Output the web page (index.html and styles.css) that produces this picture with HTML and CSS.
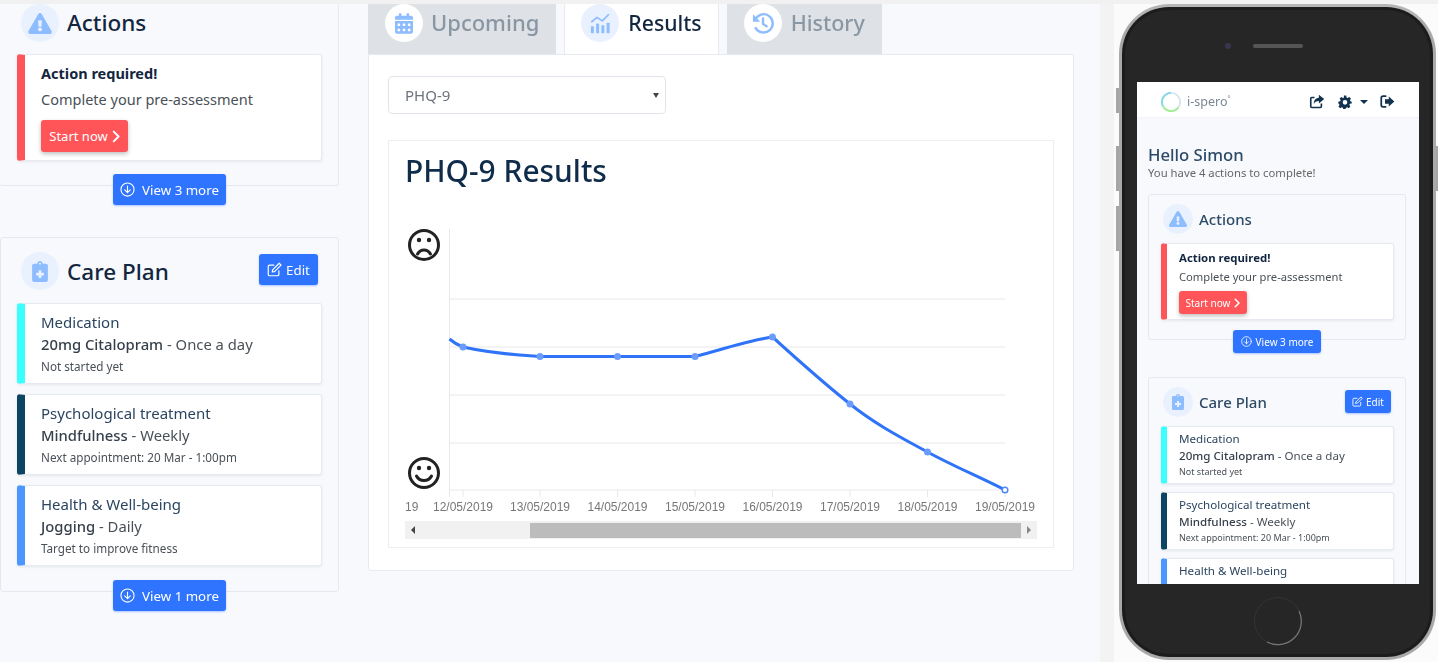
FILE: index.html
```html
<!DOCTYPE html>
<html lang="en">
<head>
    <meta charset="UTF-8">
    <meta name="viewport" content="width=device-width, initial-scale=1.0">
    <title>i-spero Dashboard</title>
    <link rel="stylesheet" href="styles.css">
</head>
<body>
    <!-- Shared icons -->
    <svg class="icon-defs" xmlns="http://www.w3.org/2000/svg">
        <symbol id="i-warning" viewBox="0 0 576 512"><path fill="currentColor" d="M569.517 440.013C587.975 472.007 564.806 512 527.94 512H48.054c-36.937 0-59.999-40.055-41.577-71.987L246.423 23.985c18.467-32.009 64.72-31.951 83.154 0l239.94 416.028zM288 354c-25.405 0-46 20.595-46 46s20.595 46 46 46 46-20.595 46-46-20.595-46-46-46zm-43.673-165.346l7.418 136c.347 6.364 5.609 11.346 11.982 11.346h48.546c6.373 0 11.635-4.982 11.982-11.346l7.418-136c.375-6.874-5.098-12.654-11.982-12.654h-63.383c-6.884 0-12.356 5.78-11.981 12.654z"/></symbol>
        <symbol id="i-calendar" viewBox="0 0 448 512"><path fill="currentColor" d="M0 464c0 26.5 21.5 48 48 48h352c26.5 0 48-21.5 48-48V192H0v272zm320-196c0-6.6 5.4-12 12-12h40c6.6 0 12 5.4 12 12v40c0 6.6-5.4 12-12 12h-40c-6.6 0-12-5.4-12-12v-40zm0 128c0-6.6 5.4-12 12-12h40c6.6 0 12 5.4 12 12v40c0 6.6-5.4 12-12 12h-40c-6.6 0-12-5.4-12-12v-40zM192 268c0-6.6 5.4-12 12-12h40c6.6 0 12 5.4 12 12v40c0 6.6-5.4 12-12 12h-40c-6.6 0-12-5.4-12-12v-40zm0 128c0-6.6 5.4-12 12-12h40c6.6 0 12 5.4 12 12v40c0 6.6-5.4 12-12 12h-40c-6.6 0-12-5.4-12-12v-40zM64 268c0-6.6 5.4-12 12-12h40c6.6 0 12 5.4 12 12v40c0 6.6-5.4 12-12 12H76c-6.6 0-12-5.4-12-12v-40zm0 128c0-6.6 5.4-12 12-12h40c6.6 0 12 5.4 12 12v40c0 6.6-5.4 12-12 12H76c-6.6 0-12-5.4-12-12v-40zM400 64h-48V16c0-8.8-7.2-16-16-16h-32c-8.8 0-16 7.2-16 16v48H160V16c0-8.8-7.2-16-16-16h-32c-8.8 0-16 7.2-16 16v48H48C21.5 64 0 85.5 0 112v48h448v-48c0-26.5-21.5-48-48-48z"/></symbol>
        <symbol id="i-chart" viewBox="0 0 24 24"><g fill="currentColor"><rect x="1" y="15" width="3.4" height="8" rx=".8"/><rect x="7" y="12" width="3.4" height="11" rx=".8"/><rect x="13" y="14" width="3.4" height="9" rx=".8"/><rect x="19" y="11" width="3.4" height="12" rx=".8"/></g><path d="M2 10l6-5 6 4 7-7" fill="none" stroke="currentColor" stroke-width="2" stroke-linecap="round" stroke-linejoin="round"/></symbol>
        <symbol id="i-history" viewBox="0 0 24 24"><g fill="none" stroke="currentColor" stroke-width="2.6" stroke-linecap="round"><path d="M3.4 8.5A10 10 0 1 1 4 17.5"/><path d="M12 7v6l4 2.5"/></g><path fill="currentColor" d="M1 2.5v8h8z"/></symbol>
        <symbol id="i-clipboard" viewBox="0 0 384 512"><path fill="currentColor" d="M336 64h-80c0-35.3-28.7-64-64-64s-64 28.7-64 64H48C21.5 64 0 85.5 0 112v352c0 26.5 21.5 48 48 48h288c26.5 0 48-21.5 48-48V112c0-26.5-21.5-48-48-48zM192 40c13.3 0 24 10.7 24 24s-10.7 24-24 24-24-10.7-24-24 10.7-24 24-24zm96 304c0 4.4-3.6 8-8 8h-56v56c0 4.4-3.6 8-8 8h-48c-4.4 0-8-3.6-8-8v-56h-56c-4.4 0-8-3.6-8-8v-48c0-4.4 3.6-8 8-8h56v-56c0-4.4 3.6-8 8-8h48c4.4 0 8 3.6 8 8v56h56c4.4 0 8 3.6 8 8v48z"/></symbol>
        <symbol id="i-down" viewBox="0 0 24 24"><g fill="none" stroke="currentColor" stroke-width="1.8" stroke-linecap="round" stroke-linejoin="round"><circle cx="12" cy="12" r="10.5"/><path d="M12 6.5v10.5M7.5 12.5l4.5 4.5 4.5-4.5"/></g></symbol>
        <symbol id="i-edit" viewBox="0 0 24 24"><g fill="none" stroke="currentColor" stroke-width="1.9" stroke-linecap="round" stroke-linejoin="round"><path d="M19 14v6a2 2 0 0 1-2 2H4a2 2 0 0 1-2-2V7a2 2 0 0 1 2-2h7"/><path d="M9 12.5L19.5 2 22.500 5 12 15.500 8.500 16z"/></g></symbol>
        <symbol id="i-chevron" viewBox="0 0 12 20"><path d="M2.500 2.500L10 10l-7.500 7.500" fill="none" stroke="currentColor" stroke-width="3" stroke-linecap="round" stroke-linejoin="round"/></symbol>
        <symbol id="i-share" viewBox="0 0 24 24"><g fill="none" stroke="currentColor" stroke-width="2.600" stroke-linejoin="round"><path d="M19 15v5a1.500 1.500 0 0 1-1.500 1.500h-14A1.500 1.500 0 0 1 2 20V7a1.500 1.500 0 0 1 1.500-1.500H8"/></g><path fill="currentColor" d="M15 1l8.500 7-8.500 7v-4c-4 0-6.500 1-8 5-.5-6 3-9.500 8-10z"/></symbol>
        <symbol id="i-cog" viewBox="0 0 24 24"><path fill="currentColor" fill-rule="evenodd" d="M10 1h4l.7 3.200 1.900.8 2.800-1.700 2.800 2.800-1.700 2.800.8 1.900L23.500 11.500v3l-3.200.7-.8 1.900 1.700 2.800-2.800 2.800-2.800-1.700-1.900.8-.7 2.200h-4l-.7-2.200-1.900-.8-2.800 1.700-2.800-2.800 1.700-2.800-.8-1.900L.5 14.500v-3l3.200-.7.8-1.900L2.800 6.100l2.800-2.800 2.800 1.700 1.900-.8zM12 8.500a4 4 0 1 0 0 8 4 4 0 0 0 0-8z"/></symbol>
        <symbol id="i-signout" viewBox="0 0 24 24"><path d="M9 3.500H5A3 3 0 0 0 2 6.500v11a3 3 0 0 0 3 3h4" fill="none" stroke="currentColor" stroke-width="2.800" stroke-linecap="round"/><path fill="currentColor" d="M14 4l9 8-9 8v-4.500H8v-7h6z"/></symbol>
    </svg>

    <div class="top-strip"></div>

    <div class="page">
        <!-- Left column -->
        <div class="left-col">
            <section class="panel panel-first">
                <div class="panel-head">
                    <span class="icon-circle"><svg class="icon icon-warning"><use href="#i-warning"/></svg></span>
                    <h2>Actions</h2>
                </div>
                <div class="item item-red item-alert">
                    <div class="item-strong">Action required!</div>
                    <div class="item-line">Complete your pre-assessment</div>
                    <button class="btn btn-red">Start now <svg class="icon-chevron"><use href="#i-chevron"/></svg></button>
                </div>
            </section>
            <button class="btn btn-blue btn-more"><svg class="icon-small"><use href="#i-down"/></svg> View 3 more</button>

            <section class="panel panel-second">
                <div class="panel-head">
                    <span class="icon-circle"><svg class="icon icon-clipboard"><use href="#i-clipboard"/></svg></span>
                    <h2>Care Plan</h2>
                    <button class="btn btn-blue btn-edit"><svg class="icon-small"><use href="#i-edit"/></svg> Edit</button>
                </div>
                <div class="item-list">
                    <div class="item item-cyan">
                        <div class="item-title">Medication</div>
                        <div class="item-line"><span class="item-name">20mg Citalopram</span> - Once a day</div>
                        <div class="item-note">Not started yet</div>
                    </div>
                    <div class="item item-navy">
                        <div class="item-title">Psychological treatment</div>
                        <div class="item-line"><span class="item-name">Mindfulness</span> - Weekly</div>
                        <div class="item-note">Next appointment: 20 Mar - 1:00pm</div>
                    </div>
                    <div class="item item-blue">
                        <div class="item-title">Health &amp; Well-being</div>
                        <div class="item-line"><span class="item-name">Jogging</span> - Daily</div>
                        <div class="item-note">Target to improve fitness</div>
                    </div>
                </div>
            </section>
            <button class="btn btn-blue btn-more"><svg class="icon-small"><use href="#i-down"/></svg> View 1 more</button>
        </div>

        <!-- Results column -->
        <div class="center-col">
            <div class="tabs">
                <div class="tab tab-upcoming"><span class="icon-circle"><svg class="icon icon-calendar"><use href="#i-calendar"/></svg></span>Upcoming</div>
                <div class="tab tab-active"><span class="icon-circle"><svg class="icon icon-chart"><use href="#i-chart"/></svg></span>Results</div>
                <div class="tab"><span class="icon-circle"><svg class="icon icon-history"><use href="#i-history"/></svg></span>History</div>
            </div>
            <div class="tab-body">
                <div class="select-wrap">
                    <select class="results-select"><option>PHQ-9</option></select>
                </div>
                <div class="chart-card">
                    <h1>PHQ-9 Results</h1>
                    <svg class="chart" viewBox="0 0 632 329" xmlns="http://www.w3.org/2000/svg">
                        <g class="face">
                            <circle cx="19" cy="53" r="14.500"/>
                            <path d="M12.500 62c3-5.500 10-5.500 13 0"/>
                            <circle cx="19" cy="281" r="14.500"/>
                            <path d="M11.500 284c3 6 12 6 15 0"/>
                        </g>
                        <g class="face-eyes">
                            <circle cx="14" cy="48" r="2.200"/><circle cx="24" cy="48" r="2.200"/>
                            <circle cx="14" cy="276" r="2.200"/><circle cx="24" cy="276" r="2.200"/>
                        </g>
                        <g class="grid">
                            <path d="M44.500 107H600M44.500 155H600M44.500 203H600M44.500 251H600"/>
                            <path d="M44.500 37V305M44.500 298H600"/>
                            <path d="M58 298v7M135 298v7M212.500 298v7M290 298v7M367.500 298v7M445 298v7M522.500 298v7M600 298v7"/>
                        </g>
                        <path class="line" d="M44.500 147C48 150 52 153 58 155C80 160 110 163 135 164.500L290 164.500C320 157 340 149 367.500 145C395 170 420 192 445 212C470 232 495 245 522.500 260C550 275 575 285 600 298"/>
                        <g class="dots">
                            <circle cx="58" cy="155" r="3.500"/><circle cx="135" cy="164.500" r="3.500"/>
                            <circle cx="212.500" cy="164.500" r="3.500"/><circle cx="290" cy="164.500" r="3.500"/>
                            <circle cx="367.500" cy="145" r="3.500"/><circle cx="445" cy="212" r="3.500"/>
                            <circle cx="522.500" cy="260" r="3.500"/>
                        </g>
                        <circle class="dot-last" cx="600" cy="298" r="2.800"/>
                        <g class="labels">
                            <text x="0" y="319" class="label-start">19</text>
                            <text x="58" y="319">12/05/2019</text>
                            <text x="135" y="319">13/05/2019</text>
                            <text x="212.500" y="319">14/05/2019</text>
                            <text x="290" y="319">15/05/2019</text>
                            <text x="367.500" y="319">16/05/2019</text>
                            <text x="445" y="319">17/05/2019</text>
                            <text x="522.500" y="319">18/05/2019</text>
                            <text x="600" y="319">19/05/2019</text>
                        </g>
                    </svg>
                    <div class="scrollbar">
                        <span class="arrow arrow-left"></span>
                        <span class="thumb"></span>
                        <span class="arrow arrow-right"></span>
                    </div>
                </div>
            </div>
        </div>

        <!-- Phone preview -->
        <div class="phone-area">
            <div class="phone">
                <span class="side-btn side-a"></span>
                <span class="side-btn side-b"></span>
                <span class="side-btn side-c"></span>
                <span class="side-btn side-d"></span>
                <div class="phone-top"><span class="speaker"></span></div>
                <div class="screen">
                    <div class="navbar">
                        <svg class="logo" viewBox="0 0 24 24"><circle cx="12" cy="12" r="10" fill="none" stroke="#d5e4ee" stroke-width="2"/><path d="M3 16a10 10 0 0 0 17 2" fill="none" stroke="#9df08f" stroke-width="2"/><path d="M12 2a10 10 0 0 0-9 14" fill="none" stroke="#7fd8e6" stroke-width="2"/></svg>
                        <span class="brand">i-spero<sup>°</sup></span>
                        <span class="nav-icons">
                            <svg class="nav-icon nav-share"><use href="#i-share"/></svg>
                            <svg class="nav-icon nav-cog"><use href="#i-cog"/></svg>
                            <span class="caret"></span>
                            <svg class="nav-icon nav-out"><use href="#i-signout"/></svg>
                        </span>
                    </div>
                    <div class="screen-body">
                        <div class="hello">Hello Simon</div>
                        <div class="hello-sub">You have 4 actions to complete!</div>

                        <section class="panel">
                            <div class="panel-head">
                                <span class="icon-circle"><svg class="icon icon-warning"><use href="#i-warning"/></svg></span>
                                <h2>Actions</h2>
                            </div>
                            <div class="item item-red item-alert">
                                <div class="item-strong">Action required!</div>
                                <div class="item-line">Complete your pre-assessment</div>
                                <button class="btn btn-red">Start now <svg class="icon-chevron"><use href="#i-chevron"/></svg></button>
                            </div>
                        </section>
                        <button class="btn btn-blue btn-more"><svg class="icon-small"><use href="#i-down"/></svg> View 3 more</button>

                        <section class="panel panel-second">
                            <div class="panel-head">
                                <span class="icon-circle"><svg class="icon icon-clipboard"><use href="#i-clipboard"/></svg></span>
                                <h2>Care Plan</h2>
                                <button class="btn btn-blue btn-edit"><svg class="icon-small"><use href="#i-edit"/></svg> Edit</button>
                            </div>
                            <div class="item-list">
                                <div class="item item-cyan">
                                    <div class="item-title">Medication</div>
                                    <div class="item-line"><span class="item-name">20mg Citalopram</span> - Once a day</div>
                                    <div class="item-note">Not started yet</div>
                                </div>
                                <div class="item item-navy">
                                    <div class="item-title">Psychological treatment</div>
                                    <div class="item-line"><span class="item-name">Mindfulness</span> - Weekly</div>
                                    <div class="item-note">Next appointment: 20 Mar - 1:00pm</div>
                                </div>
                                <div class="item item-blue">
                                    <div class="item-title">Health &amp; Well-being</div>
                                    <div class="item-line"><span class="item-name">Jogging</span> - Daily</div>
                                    <div class="item-note">Target to improve fitness</div>
                                </div>
                            </div>
                        </section>
                    </div>
                </div>
                <div class="phone-bottom">
                    <svg class="home-btn" viewBox="0 0 50 50">
                        <circle cx="25" cy="25" r="23.500" fill="none" stroke="#343434" stroke-width="1"/>
                        <path d="M46 15A23.500 23.500 0 0 1 14 46" fill="none" stroke="#777" stroke-width="1.200"/>
                    </svg>
                </div>
            </div>
        </div>
    </div>
</body>
</html>
```

FILE: styles.css
```css
* {
    margin: 0;
    padding: 0;
    box-sizing: border-box;
}

html, body {
    height: 100%;
    overflow: hidden;
}

body {
    background-color: #f8f9fc;
    font-family: "Noto Sans", Arial, sans-serif;
    color: #12263f;
    display: flex;
    flex-direction: column;
}

.icon-defs {
    display: none;
}

.top-strip {
    height: 4px;
    background-color: #f1f1f1;
    flex-shrink: 0;
}

.page {
    flex: 1;
    min-height: 0;
    display: flex;
    overflow: hidden;
    filter: blur(0.5px);
}

/* Left column */
.left-col {
    width: 339px;
    flex-shrink: 0;
    display: flex;
    flex-direction: column;
}

.panel {
    border: 1px solid #e5e8ee;
    border-radius: 3px;
    padding: 14px 16px 25px 16px;
    background-color: #f8f9fc;
}

.panel-first {
    border-top: none;
    border-left: none;
    padding: 0 16px 25px 17px;
    height: 182px;
}

.panel-second {
    margin-top: 32px;
}

.panel-head {
    display: flex;
    align-items: center;
    height: 38px;
    margin-bottom: 13px;
}

.panel-first .panel-head {
    margin-bottom: 12px;
    padding-left: 4px;
}

.panel-first .panel-head h2 {
    margin-top: -2px;
}

.panel-second .panel-head {
    padding-left: 4px;
}

.panel-head h2 {
    font-size: 22.500px;
    font-weight: 500;
    margin-left: 8px;
    color: #12263f;
}

.icon-circle {
    width: 38px;
    height: 38px;
    border-radius: 50%;
    background-color: #e9f1ff;
    display: inline-flex;
    align-items: center;
    justify-content: center;
    flex-shrink: 0;
    color: #8dbcff;
}

.icon-warning { width: 24px; height: 21px; }
.icon-clipboard { width: 16px; height: 21px; }
.icon-calendar { width: 18px; height: 21px; }
.icon-chart { width: 21px; height: 21px; }
.icon-history { width: 22px; height: 22px; }

.item {
    background-color: #fff;
    border: 1px solid #e7eaf0;
    border-left: 8px solid #ccc;
    border-radius: 3px;
    padding: 7px 8px 6px 16px;
    box-shadow: 0 1px 3px rgba(0, 0, 0, 0.08);
    height: 81px;
    font-size: 15px;
    line-height: 22px;
    color: #495057;
}

.item-alert {
    height: 107px;
    padding-top: 7px;
    font-size: 14.500px;
}

.item-red { border-left-color: #ff5558; }
.item-cyan { border-left-color: #39ffff; }
.item-navy { border-left-color: #0b4563; }
.item-blue { border-left-color: #4c97ff; }

.item-list {
    display: flex;
    flex-direction: column;
    gap: 10px;
}

.item-strong {
    font-weight: 700;
    color: #12263f;
    margin-bottom: 4px;
}

.item-title {
    color: #2b4560;
}

.item-line {
    font-size: 14.800px;
}

.item-alert .item-line {
    font-size: 14.500px;
}

.item-name {
    color: #343f4b;
    font-weight: 500;
}

.item-note {
    font-size: 11.700px;
    color: #495057;
}

.btn {
    border: none;
    border-radius: 3px;
    color: #fff;
    font-family: inherit;
    font-size: 13.300px;
    height: 32px;
    display: inline-flex;
    align-items: center;
    justify-content: center;
}

.btn-red {
    background-color: #ff5558;
    width: 87px;
    margin-top: 10px;
    box-shadow: 0 2px 4px rgba(0, 0, 0, 0.25);
    gap: 4px;
    font-size: 13px;
}

.btn-blue {
    background-color: #2f74ff;
    box-shadow: 0 1px 2px rgba(47, 116, 255, 0.4);
}

.btn-more {
    width: 113px;
    height: 31px;
    align-self: center;
    margin-top: -12px;
    position: relative;
    gap: 7px;
}

.btn-edit {
    width: 59px;
    height: 31px;
    margin-left: auto;
    margin-right: 4px;
    margin-top: -3px;
    gap: 4px;
}

.icon-small {
    width: 15px;
    height: 15px;
    flex-shrink: 0;
}

.icon-chevron {
    width: 8px;
    height: 13px;
}

/* Results column */
.center-col {
    width: 706px;
    margin-left: 29px;
    flex-shrink: 0;
    display: flex;
    flex-direction: column;
}

.tabs {
    display: flex;
    gap: 8px;
    height: 50px;
}

.tab {
    display: flex;
    align-items: flex-start;
    gap: 9px;
    padding: 0 17px;
    background-color: #dee2e6;
    color: #8996a3;
    font-size: 21.500px;
    font-weight: 500;
    line-height: 37px;
}

.tab-upcoming {
    gap: 8px;
    font-size: 22px;
}

.tab .icon-circle {
    background-color: #fff;
}

.tab-active {
    background-color: #fff;
    color: #12263f;
    border: 1px solid #e7eaf0;
    border-top: none;
    border-bottom: none;
    padding: 0 16px;
    font-size: 21.200px;
    position: relative;
}

.tab-active .icon-circle {
    background-color: #e9f1ff;
}

.tab-body {
    background-color: #fff;
    border: 1px solid #e7eaf0;
    border-radius: 0 0 3px 3px;
    height: 517px;
    padding: 21px 19px;
}

.select-wrap {
    width: 278px;
    height: 38px;
    position: relative;
}

.select-wrap::after {
    content: "";
    position: absolute;
    right: 7px;
    top: 17px;
    border-left: 3px solid transparent;
    border-right: 3px solid transparent;
    border-top: 5px solid #444;
}

.results-select {
    appearance: none;
    width: 100%;
    height: 100%;
    background-color: #fff;
    border: 1.500px solid #e1e5eb;
    border-radius: 4px;
    padding: 0 16px;
    font-family: inherit;
    font-size: 15px;
    color: #6c757d;
}

.chart-card {
    margin-top: 26px;
    height: 408px;
    border: 1px solid #eeeeee;
    padding: 9px 16px 0 16px;
}

.chart-card h1 {
    font-size: 29.900px;
    font-weight: 500;
    line-height: 42px;
    color: #0f2c4a;
}

.chart {
    display: block;
    width: 632px;
    height: 329px;
}

.face {
    fill: none;
    stroke: #222;
    stroke-width: 3;
    stroke-linecap: round;
}

.face-eyes {
    fill: #222;
}

.grid {
    fill: none;
    stroke: #e8e8e8;
    stroke-width: 1;
}

.line {
    fill: none;
    stroke: #2e73f8;
    stroke-width: 3;
}

.dots {
    fill: #6c9cfb;
}

.dot-last {
    fill: #fff;
    stroke: #4e88fa;
    stroke-width: 1.500;
}

.labels {
    font-family: "Liberation Sans", Arial, sans-serif;
    font-size: 12px;
    fill: #777;
    text-anchor: middle;
}

.labels .label-start {
    text-anchor: start;
}

.scrollbar {
    height: 18px;
    background-color: #f1f1f1;
    display: flex;
    align-items: center;
}

.thumb {
    height: 15px;
    flex: 1;
    background-color: #bcbcbc;
}

.arrow {
    width: 0;
    height: 0;
    border-top: 4px solid transparent;
    border-bottom: 4px solid transparent;
}

.arrow-left {
    border-right: 4px solid #444;
    margin-left: 6px;
    margin-right: 115px;
}

.arrow-right {
    border-left: 4px solid #888;
    margin-left: 6px;
    margin-right: 6px;
}

/* Phone preview */
.phone-area {
    width: 338px;
    margin-left: 26px;
    flex-shrink: 0;
    background-color: #fbfbfb;
    border-left: 14px solid #f3f3f3;
    padding-left: 5px;
}

.phone {
    width: 317px;
    height: 656px;
    background-color: #262626;
    border: 3px solid #a9a9a9;
    border-top-color: #b5b5b5;
    border-radius: 50px;
    box-shadow: inset 0 0 0 3px #1c1c1c;
    display: flex;
    flex-direction: column;
    align-items: stretch;
    position: relative;
}

.side-btn {
    position: absolute;
    width: 3px;
    background-color: #a5a5a5;
    left: -6px;
}

.side-a { top: 81px; height: 25px; }
.side-b { top: 139px; height: 45px; }
.side-c { top: 199px; height: 45px; }
.side-d { left: auto; right: -5px; top: 139px; height: 45px; width: 2px; }

.phone-top {
    height: 75px;
    flex-shrink: 0;
    display: flex;
    justify-content: center;
    padding-top: 37px;
}

.speaker {
    width: 50px;
    height: 4px;
    border-radius: 2px;
    background-color: #555;
    position: relative;
}

.speaker::before {
    content: "";
    position: absolute;
    left: -28px;
    top: -1px;
    width: 6px;
    height: 6px;
    border-radius: 50%;
    background-color: #3c3350;
}

.screen {
    height: 502px;
    width: 282px;
    margin-left: 15px;
    background-color: #f8f9fc;
    overflow: hidden;
    filter: blur(0.3px);
    flex-shrink: 0;
}

.phone-bottom {
    flex: 1;
    display: flex;
    align-items: flex-start;
    justify-content: center;
    padding-top: 12px;
}

.home-btn {
    width: 50px;
    height: 50px;
}

.navbar {
    height: 36px;
    background-color: #fff;
    display: flex;
    align-items: center;
    padding: 4px 0 0 23px;
    border-bottom: 1px solid #f3f4f6;
}

.logo {
    width: 22px;
    height: 22px;
}

.brand {
    font-size: 12.500px;
    color: #7a8793;
    margin-left: 5px;
}

.brand sup {
    font-size: 7px;
}

.nav-icons {
    margin-left: auto;
    margin-right: 24px;
    display: flex;
    align-items: center;
    color: #12324f;
}

.nav-icon {
    width: 16px;
    height: 15px;
}

.nav-cog {
    margin-left: 13px;
    width: 14px;
    height: 14px;
}

.caret {
    margin-left: 8px;
    border-left: 4px solid transparent;
    border-right: 4px solid transparent;
    border-top: 4px solid #12324f;
}

.nav-out {
    margin-left: 12px;
    width: 15px;
}

.screen-body {
    padding: 26px 13px 0 11px;
    display: flex;
    flex-direction: column;
}

.hello {
    font-size: 16.700px;
    line-height: 22px;
    font-weight: 500;
    color: #2d4a66;
}

.hello-sub {
    font-size: 11.300px;
    line-height: 14px;
    color: #666;
    margin-bottom: 14px;
}

.screen .panel {
    padding: 9px 11px 19px 12px;
}

.screen .panel-head {
    height: 30px;
    margin-bottom: 9px;
    padding-left: 2px;
}

.screen .panel-head h2 {
    font-size: 15px;
    font-weight: 500;
    margin: 0 0 0 6px;
    color: #2d4a66;
}

.screen .panel-second {
    margin-top: 24px;
}

.screen .icon-circle {
    width: 30px;
    height: 30px;
}

.screen .icon-warning { width: 18px; height: 16px; }
.screen .icon-clipboard { width: 12px; height: 16px; }

.screen .item {
    border-left-width: 6px;
    padding: 4px 6px 3px 12px;
    font-size: 11.600px;
    line-height: 16.500px;
    height: 58px;
}

.screen .item-line {
    font-size: 11.600px;
}

.screen .item-alert {
    height: 77px;
    padding-top: 6px;
    font-size: 11.200px;
}

.screen .item-alert .item-line {
    font-size: 11.200px;
}

.screen .item-strong {
    font-size: 11.400px;
    margin-bottom: 2px;
}

.screen .item-note {
    font-size: 9px;
}

.screen .item-list {
    gap: 8px;
}

.screen .btn {
    font-size: 10px;
    height: 23px;
}

.screen .btn-red {
    width: 68px;
    margin-top: 6px;
}

.screen .btn-more {
    width: 88px;
    margin-top: -10px;
    gap: 4px;
}

.screen .btn-edit {
    width: 46px;
    margin-top: -1px;
    margin-right: 3px;
    gap: 3px;
}

.screen .icon-small {
    width: 11px;
    height: 11px;
}

.screen .icon-chevron {
    width: 6px;
    height: 10px;
}
```
